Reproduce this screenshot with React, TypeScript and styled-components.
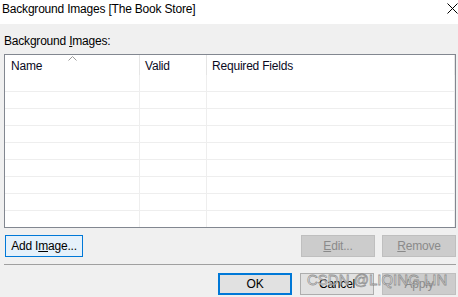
import React from 'react';
import { styled, createGlobalStyle } from 'styled-components';

const GlobalStyle = createGlobalStyle`
  html, body {
    margin: 0;
    padding: 0;
    background: #f0f0f0;
  }
  body {
    width: 458px;
    height: 297px;
    overflow: hidden;
    font-family: 'Liberation Sans', Arial, sans-serif;
    font-size: 12px;
    letter-spacing: -0.2px;
    color: #000;
  }
`;

const columns = [
  { title: 'Name', width: 135 },
  { title: 'Valid', width: 67 },
  { title: 'Required Fields', width: 0 },
];

const ROW_COUNT = 9;

const App = () => {
  return (
    <>
      <GlobalStyle />
      <Window>
        <TitleBar>
          <Title>Background Images [The Book Store]</Title>
          <CloseIcon width="11" height="11" viewBox="0 0 11 11">
            <path d="M0.5 0.5 L10.5 10.5 M10.5 0.5 L0.5 10.5" stroke="#000" strokeWidth="1" fill="none" />
          </CloseIcon>
        </TitleBar>

        <Body>
          <FieldLabel>
            Background <u>I</u>mages:
          </FieldLabel>

          <ListView>
            <HeaderRow>
              {columns.map((col, i) => (
                <HeaderCell key={col.title} $width={col.width}>
                  {i === 0 && (
                    <SortArrow width="9" height="5" viewBox="0 0 9 5">
                      <path d="M0.5 4.5 L4.5 0.5 L8.5 4.5" stroke="#9a9a9a" fill="none" />
                    </SortArrow>
                  )}
                  {col.title}
                </HeaderCell>
              ))}
            </HeaderRow>
            {Array.from({ length: ROW_COUNT }).map((_, r) => (
              <Row key={r}>
                {columns.map(col => (
                  <Cell key={col.title} $width={col.width} />
                ))}
              </Row>
            ))}
          </ListView>

          <ActionRow>
            <Button $focused>
              Add I<u>m</u>age...
            </Button>
            <Spacer />
            <Button disabled>
              <u>E</u>dit...
            </Button>
            <Button disabled>
              <u>R</u>emove
            </Button>
          </ActionRow>

          <Separator />

          <FooterRow>
            <Button $default>OK</Button>
            <Button>Cancel</Button>
            <Button disabled>Apply</Button>
            <Watermark>CSDN @LIQING LIN</Watermark>
          </FooterRow>
        </Body>
      </Window>
    </>
  );
};

export default App;

const Window = styled.div`
  width: 458px;
  height: 297px;
  display: flex;
  flex-direction: column;
  background: #f0f0f0;
`;

const TitleBar = styled.div`
  height: 24px;
  background: #fff;
  display: flex;
  justify-content: space-between;
  align-items: flex-start;
  padding: 1px 0 0 2px;
  box-sizing: border-box;
`;

const Title = styled.span`
  line-height: 16px;
`;

const CloseIcon = styled.svg`
  margin-top: 2px;
  flex-shrink: 0;
`;

const Body = styled.div`
  flex: 1;
  display: flex;
  flex-direction: column;
  padding: 9px 2px 0 4px;
`;

const FieldLabel = styled.div`
  line-height: 16px;
  margin-bottom: 5px;
`;

const ListView = styled.div`
  width: 452px;
  height: 174px;
  box-sizing: border-box;
  border: 1px solid #828790;
  background: #fff;
  overflow: hidden;
`;

const HeaderRow = styled.div`
  display: flex;
  height: 20px;
`;

const HeaderCell = styled.div<{ $width: number }>`
  position: relative;
  ${p => (p.$width ? `width: ${p.$width}px; flex-shrink: 0;` : 'flex: 1;')}
  border-right: 1px solid #e5e5e5;
  padding: 3px 0 0 5px;
  line-height: 16px;
  box-sizing: border-box;
  color: #0a0a1e;
  &:first-child {
    padding-left: 6px;
  }
`;

const SortArrow = styled.svg`
  position: absolute;
  left: 63px;
  top: 1px;
`;

const Row = styled.div`
  display: flex;
  height: 17px;
  box-sizing: border-box;
  border-bottom: 1px solid #eeeeee;
`;

const Cell = styled.div<{ $width: number }>`
  ${p => (p.$width ? `width: ${p.$width}px; flex-shrink: 0;` : 'flex: 1;')}
  border-right: 1px solid #eeeeee;
  box-sizing: border-box;
`;

const ActionRow = styled.div`
  display: flex;
  gap: 7px;
  margin-top: 7px;
  padding-left: 1px;
`;

const Spacer = styled.div`
  flex: 1;
`;

const Button = styled.button<{ $focused?: boolean; $default?: boolean }>`
  width: 74px;
  height: 22px;
  box-sizing: border-box;
  font-family: 'Liberation Sans', Arial, sans-serif;
  font-size: 12px;
  letter-spacing: -0.2px;
  padding: 0;
  color: #000;
  background: #e1e1e1;
  border: 1px solid #adadad;
  border-radius: 0;

  ${p =>
    p.$focused &&
    `
    width: 78px;
    background: #e5f1fb;
    border-color: #0078d7;
  `}

  ${p =>
    p.$default &&
    `
    border: 2px solid #0078d7;
  `}

  &:disabled {
    background: #cccccc;
    border-color: #bfbfbf;
    color: #8a8a8a;
  }
`;

const Separator = styled.div`
  height: 1px;
  background: #a0a0a0;
  margin: 7px 0 8px 0;
`;

const FooterRow = styled.div`
  position: relative;
  display: flex;
  justify-content: flex-end;
  gap: 8px;
`;

const Watermark = styled.span`
  position: absolute;
  left: 303px;
  top: -2px;
  white-space: nowrap;
  font-family: 'Liberation Sans', Arial, sans-serif;
  font-size: 15px;
  letter-spacing: 0;
  color: rgba(255, 255, 255, 0.75);
  -webkit-text-stroke: 0.8px rgba(110, 110, 110, 0.7);
  pointer-events: none;
`;
